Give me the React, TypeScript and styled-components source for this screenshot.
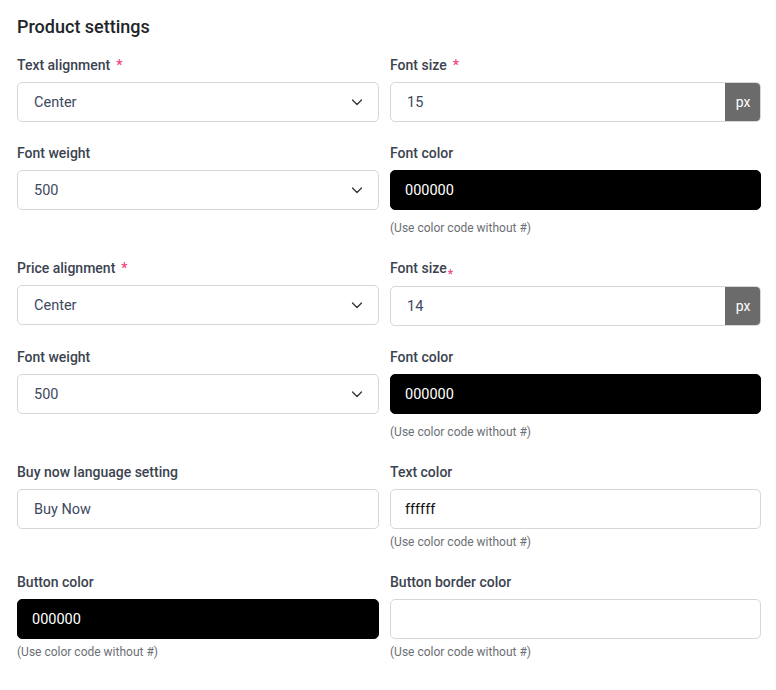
import React from "react";
import styled, { createGlobalStyle } from "styled-components";

const GlobalStyle = createGlobalStyle`
  body {
    margin: 0;
    background: #ffffff;
    font-family: Roboto, "Liberation Sans", Arial, sans-serif;
  }
  * { box-sizing: border-box; }
`;

const Page = styled.div`
  padding: 15px 15px 20px 17px;
`;

const Title = styled.h2`
  margin: 0 0 16px;
  font-size: 18px;
  line-height: 24px;
  font-weight: 500;
  color: #212529;
`;

const Grid = styled.div`
  display: grid;
  grid-template-columns: 362px 1fr;
  column-gap: 11px;
  row-gap: 21px;
  align-items: start;
`;

const Field = styled.div`
  display: flex;
  flex-direction: column;
`;

const Label = styled.label`
  font-size: 14px;
  line-height: 20px;
  font-weight: 500;
  color: #3b4350;
  margin-bottom: 7px;
`;

const Star = styled.span<{ $tight?: boolean }>`
  color: #f0457e;
  margin-left: ${(p) => (p.$tight ? "1px" : "6px")};
  font-size: ${(p) => (p.$tight ? "12px" : "14px")};
  position: relative;
  top: ${(p) => (p.$tight ? "5px" : "0")};
`;

const Control = styled.div<{ $dark?: boolean }>`
  display: flex;
  align-items: center;
  height: 40px;
  border: 1px solid ${(p) => (p.$dark ? "#000" : "#d6d6dc")};
  border-radius: 5px;
  background: ${(p) => (p.$dark ? "#000" : "#fff")};
  overflow: hidden;
`;

const Value = styled.span<{ $tone?: "light" | "dark" }>`
  flex: 1;
  padding-left: ${(p) => (p.$tone ? "14px" : "16px")};
  font-size: 14.5px;
  color: ${(p) =>
    p.$tone === "light" ? "#ffffff" : p.$tone === "dark" ? "#111111" : "#3d4a5e"};
`;

const Chevron = styled.svg`
  width: 12px;
  height: 12px;
  margin-right: 15px;
`;

const Addon = styled.span`
  align-self: stretch;
  width: 36px;
  display: flex;
  align-items: center;
  justify-content: center;
  background: #6b6b6b;
  color: #ffffff;
  font-size: 14px;
  margin: -1px -1px -1px 0;
`;

const Help = styled.div<{ $near?: boolean }>`
  margin-top: ${(p) => (p.$near ? "4px" : "9px")};
  font-size: 12px;
  line-height: 18px;
  color: #6c6f75;
`;

const Down = () => (
  <Chevron viewBox="0 0 12 12" fill="none">
    <path d="M1.5 4l4.5 4.5L10.5 4" stroke="#333" strokeWidth="1.3" strokeLinecap="round" strokeLinejoin="round" />
  </Chevron>
);

const Select = ({ value }: { value: string }) => (
  <Control>
    <Value>{value}</Value>
    <Down />
  </Control>
);

const PxInput = ({ value }: { value: string }) => (
  <Control>
    <Value>{value}</Value>
    <Addon>px</Addon>
  </Control>
);

const ColorInput = ({ value, dark }: { value: string; dark?: boolean }) => (
  <Control $dark={dark}>
    <Value $tone={dark ? "light" : "dark"}>{value}</Value>
  </Control>
);

const hint = "(Use color code without #)";

export default function App() {
  return (
    <Page>
      <GlobalStyle />
      <Title>Product settings</Title>
      <Grid>
        <Field>
          <Label>Text alignment<Star>*</Star></Label>
          <Select value="Center" />
        </Field>
        <Field>
          <Label>Font size<Star>*</Star></Label>
          <PxInput value="15" />
        </Field>

        <Field>
          <Label>Font weight</Label>
          <Select value="500" />
        </Field>
        <Field>
          <Label>Font color</Label>
          <ColorInput value="000000" dark />
          <Help>{hint}</Help>
        </Field>

        <Field>
          <Label>Price alignment<Star>*</Star></Label>
          <Select value="Center" />
        </Field>
        <Field>
          <Label>Font size<Star $tight>*</Star></Label>
          <PxInput value="14" />
        </Field>

        <Field>
          <Label>Font weight</Label>
          <Select value="500" />
        </Field>
        <Field>
          <Label>Font color</Label>
          <ColorInput value="000000" dark />
          <Help>{hint}</Help>
        </Field>

        <Field>
          <Label>Buy now language setting</Label>
          <Control>
            <Value>Buy Now</Value>
          </Control>
        </Field>
        <Field>
          <Label>Text color</Label>
          <ColorInput value="ffffff" />
          <Help $near>{hint}</Help>
        </Field>

        <Field>
          <Label>Button color</Label>
          <ColorInput value="000000" dark />
          <Help $near>{hint}</Help>
        </Field>
        <Field>
          <Label>Button border color</Label>
          <ColorInput value="" />
          <Help $near>{hint}</Help>
        </Field>
      </Grid>
    </Page>
  );
}
